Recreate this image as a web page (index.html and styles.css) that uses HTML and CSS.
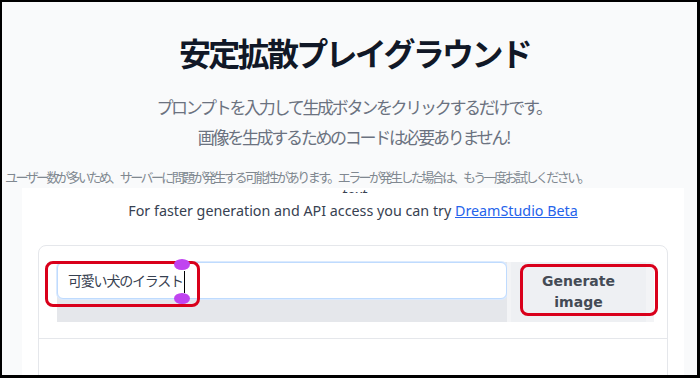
FILE: index.html
```html
<!DOCTYPE html>
<html>
    <head>
        <meta charset="utf-8">
        <link rel="stylesheet" href="styles.css">
    </head>
    <body>
        <div id="page">
            <h1 class="title">安定拡散プレイグラウンド</h1>
            <p class="sub">プロンプトを入力して生成ボタンをクリックするだけです。</p>
            <p class="sub">画像を生成するためのコードは必要ありません!</p>
            <p class="note">ユーザー数が多いため、サーバーに問題が発生する可能性があります。エラーが発生した場合は、もう一度お試しください。</p>

            <div id="panel">
                <div class="cut"><span>text.</span></div>
                <p class="info">For faster generation and API access you can try <a href="#">DreamStudio Beta</a></p>

                <div id="card">
                    <div class="row">
                        <div class="field">
                            <div class="box">可愛い犬のイラスト<span class="caret"></span></div>
                        </div>
                        <div class="btnWrap">
                            <button class="gen">Generate<br>image</button>
                        </div>
                    </div>
                    <div class="rest"></div>

                    <div class="mark markInput"></div>
                    <div class="mark markBtn"></div>
                    <div class="handle handleTop"></div>
                    <div class="handle handleBottom"></div>
                </div>
            </div>
        </div>
    </body>
</html>
```

FILE: styles.css
```css
body{
    margin: 0;
    background: black;
    padding: 2px 3px 3px 2px;
}
#page{
    height: 373px;
    overflow: hidden;
    background: #f9fafb;
    font-family: "Noto Sans CJK JP", sans-serif;
}

.title{
    margin: 30px 0 0 0;
    padding-left: 10px;
    text-align: center;
    font-size: 32px;
    line-height: 40px;
    letter-spacing: -2.7px;
    font-weight: bold;
    color: #111827;
}
.sub{
    margin: 0;
    padding-left: 8px;
    text-align: center;
    font-size: 17px;
    line-height: 30px;
    letter-spacing: -2.3px;
    color: #6b7280;
}
.title + .sub{
    margin-top: 20px;
}
.note{
    margin: 16px 0 0 3px;
    font-size: 13px;
    line-height: 18px;
    letter-spacing: -2.55px;
    color: #808890;
    white-space: nowrap;
}

#panel{
    margin: 2px 13px 0 20px;
    background: white;
    height: 200px;
}
.cut{
    height: 5px;
    overflow: hidden;
    text-align: center;
    font-family: "Noto Sans", sans-serif;
    font-size: 14px;
    line-height: 14px;
    color: #374151;
}
.cut span{
    display: inline-block;
    margin-top: -8px;
    margin-left: 8px;
}
.info{
    margin: 8px 0 0 0;
    text-align: center;
    font-family: "Noto Sans", sans-serif;
    font-size: 14.3px;
    line-height: 20px;
    color: #374151;
}
.info a{
    color: #2563eb;
}

#card{
    position: relative;
    margin: 24px 16px 0 16px;
    height: 200px;
    border: 1px solid #e5e7eb;
    border-radius: 8px;
    background: white;
}
.row{
    display: flex;
    margin: 16px 13px 0 18px;
    height: 60px;
}
.field{
    width: 450px;
    background: #e5e7eb;
}
.box{
    height: 37px;
    box-sizing: border-box;
    border: 1px solid #bfdbfe;
    border-radius: 6px;
    background: white;
    padding: 0 0 0 10px;
    font-size: 14px;
    line-height: 35px;
    letter-spacing: -1.2px;
    color: #374151;
    box-shadow: 0 0 0 1px #dbeafe;
}
.caret{
    display: inline-block;
    width: 1px;
    height: 22px;
    background: black;
    vertical-align: middle;
    margin-left: 1px;
}
.btnWrap{
    flex: 1;
    background: #f3f4f6;
    display: flex;
}
.gen{
    flex: 1;
    margin: 0 8px 0 4px;
    border: 0;
    background: #eef0f3;
    font-family: "DejaVu Sans", sans-serif;
    font-weight: bold;
    font-size: 14px;
    line-height: 21px;
    color: #444b55;
}
.rest{
    margin-top: 16px;
    border-top: 1px solid #e5e7eb;
}

/* red annotation boxes drawn over the screenshot */
.mark{
    position: absolute;
    border: 3px solid #d9001b;
    border-radius: 8px;
}
.markInput{
    left: 6px;
    top: 15px;
    width: 149px;
    height: 40px;
}
.markBtn{
    left: 481px;
    top: 18px;
    width: 132px;
    height: 46px;
}
.handle{
    position: absolute;
    left: 135px;
    width: 16px;
    height: 11px;
    border-radius: 50%;
    background: #c044f0;
}
.handleTop{
    top: 13px;
}
.handleBottom{
    top: 47px;
}
```
